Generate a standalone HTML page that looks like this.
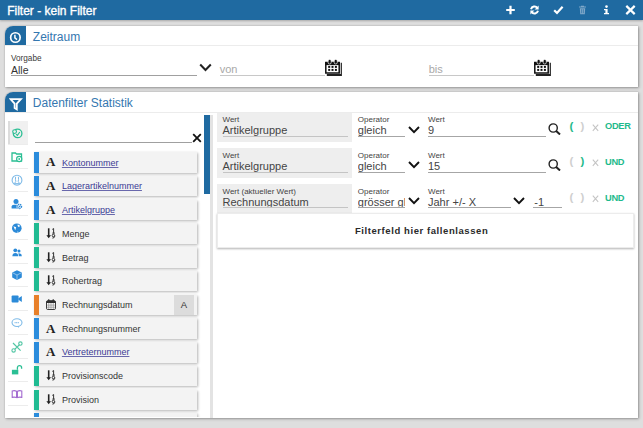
<!DOCTYPE html>
<html><head><meta charset="utf-8"><style>
html,body{margin:0;padding:0;}
body{width:643px;height:428px;overflow:hidden;position:relative;background:#dedede;font-family:'Liberation Sans', sans-serif;}
</style></head><body>
<div style="position:absolute;left:0px;top:0px;width:643px;height:19.5px;background:#1f6aa1;box-shadow:0 1px 2px rgba(0,0,0,0.25)"></div><div style="position:absolute;left:7.2px;top:4.84px;font-size:12px;line-height:12px;white-space:nowrap;font-family:'Liberation Sans', sans-serif;color:#fff;-webkit-text-stroke:0.35px #fff">Filter - kein Filter</div><svg style="position:absolute;left:505px;top:5px;" width="11" height="10" viewBox="0 0 11 10"><path d="M5.5 0.8V9.2M1.2 5H9.8" stroke="#fff" stroke-width="2.2"/></svg><svg style="position:absolute;left:529px;top:5px;" width="11" height="10" viewBox="0 0 11 10"><path d="M2 4.2A3.6 3.6 0 0 1 8.4 3" fill="none" stroke="#fff" stroke-width="2"/><path d="M9.6 0.6V4.6H5.6Z" fill="#fff"/><path d="M9 5.8A3.6 3.6 0 0 1 2.6 7" fill="none" stroke="#fff" stroke-width="2"/><path d="M1.4 9.4V5.4H5.4Z" fill="#fff"/></svg><svg style="position:absolute;left:553px;top:5px;" width="11" height="10" viewBox="0 0 11 10"><path d="M1.2 5.2L4 8L9.6 1.8" fill="none" stroke="#fff" stroke-width="2.2"/></svg><svg style="position:absolute;left:578px;top:5px;" width="9" height="10" viewBox="0 0 9 10"><path d="M1 2H8M3 1.4H6" stroke="#7fa8c9" stroke-width="1.2"/><path d="M1.8 3.2H7.2L6.8 9.2H2.2Z" fill="#7fa8c9"/><path d="M3.6 4.2V8.2M5.4 4.2V8.2" stroke="#1f6aa1" stroke-width="0.6"/></svg><svg style="position:absolute;left:603px;top:5px;" width="7" height="10" viewBox="0 0 7 10"><circle cx="3.5" cy="1.6" r="1.3" fill="#fff"/><path d="M1 4H4.6V8H6V9.2H1V8H2.4V5.2H1Z" fill="#fff"/></svg><svg style="position:absolute;left:625px;top:5px;" width="11" height="10" viewBox="0 0 11 10"><path d="M1.3 0.9L9.7 9.1M9.7 0.9L1.3 9.1" stroke="#fff" stroke-width="2.2"/></svg><div style="position:absolute;left:5px;top:26px;width:633px;height:61px;background:#fff;box-shadow:0 0 1.5px rgba(0,0,0,0.28),1px 1px 3px rgba(0,0,0,0.3);border-top-left-radius:8px"></div><div style="position:absolute;left:5px;top:26px;width:21px;height:19px;background:#1f6aa1;border-top-left-radius:8px"></div><svg style="position:absolute;left:9px;top:30.6px;" width="13" height="13" viewBox="0 0 13 13"><circle cx="6.4" cy="6.5" r="4.75" fill="none" stroke="#fff" stroke-width="1.7"/><path d="M5.9 3.8V6.9L8 8.6" fill="none" stroke="#fff" stroke-width="1.5"/></svg><div style="position:absolute;left:32.8px;top:30.84px;font-size:12px;line-height:12px;white-space:nowrap;font-family:'Liberation Sans', sans-serif;color:#3577b0">Zeitraum</div><div style="position:absolute;left:5px;top:45px;width:633px;height:1px;background:#ececec"></div><div style="position:absolute;left:11px;top:55.36px;font-size:8.2px;line-height:8.2px;white-space:nowrap;font-family:'Liberation Sans', sans-serif;color:#3a3a3a">Vorgabe</div><div style="position:absolute;left:11px;top:64.61px;font-size:10.5px;line-height:10.5px;white-space:nowrap;font-family:'Liberation Sans', sans-serif;color:#333">Alle</div><div style="position:absolute;left:11px;top:75px;width:186px;height:1px;background:#a0a0a0"></div><svg style="position:absolute;left:199px;top:63px;" width="13" height="10" viewBox="0 0 13 10"><path d="M1.2 1.5L6.5 7L11.8 1.5" fill="none" stroke="#222" stroke-width="2"/></svg><div style="position:absolute;left:219.7px;top:63.79px;font-size:11px;line-height:11px;white-space:nowrap;font-family:'Liberation Sans', sans-serif;color:#a8a8a8">von</div><div style="position:absolute;left:219.7px;top:75px;width:105.5px;height:1px;background:#c8c8c8"></div><svg style="position:absolute;left:325px;top:59px;" width="18" height="18" viewBox="0 0 18 18"><path d="M15.7 3.7H16.9V17H1.8V15.1H15.7Z" fill="#222"/><rect x="0.8" y="3.6" width="13.4" height="10.4" fill="#fff" stroke="#111" stroke-width="1.5"/><rect x="0.1" y="2.9" width="14.8" height="3.2" fill="#111"/><rect x="3.1" y="0.4" width="3.1" height="4.6" rx="1.5" fill="#111" stroke="#fff" stroke-width="0.7"/><rect x="9.2" y="0.4" width="3.1" height="4.6" rx="1.5" fill="#111" stroke="#fff" stroke-width="0.7"/><rect x="3.2" y="6.9" width="2" height="2" fill="#111"/><rect x="3.2" y="9.9" width="2" height="2" fill="#111"/><rect x="6.5" y="6.9" width="2" height="2" fill="#111"/><rect x="6.5" y="9.9" width="2" height="2" fill="#111"/><rect x="9.9" y="6.9" width="2" height="2" fill="#111"/><rect x="9.9" y="9.9" width="2" height="2" fill="#111"/></svg><div style="position:absolute;left:428.7px;top:63.79px;font-size:11px;line-height:11px;white-space:nowrap;font-family:'Liberation Sans', sans-serif;color:#a8a8a8">bis</div><div style="position:absolute;left:428.7px;top:75px;width:105.7px;height:1px;background:#c8c8c8"></div><svg style="position:absolute;left:534.4px;top:59px;" width="18" height="18" viewBox="0 0 18 18"><path d="M15.7 3.7H16.9V17H1.8V15.1H15.7Z" fill="#222"/><rect x="0.8" y="3.6" width="13.4" height="10.4" fill="#fff" stroke="#111" stroke-width="1.5"/><rect x="0.1" y="2.9" width="14.8" height="3.2" fill="#111"/><rect x="3.1" y="0.4" width="3.1" height="4.6" rx="1.5" fill="#111" stroke="#fff" stroke-width="0.7"/><rect x="9.2" y="0.4" width="3.1" height="4.6" rx="1.5" fill="#111" stroke="#fff" stroke-width="0.7"/><rect x="3.2" y="6.9" width="2" height="2" fill="#111"/><rect x="3.2" y="9.9" width="2" height="2" fill="#111"/><rect x="6.5" y="6.9" width="2" height="2" fill="#111"/><rect x="6.5" y="9.9" width="2" height="2" fill="#111"/><rect x="9.9" y="6.9" width="2" height="2" fill="#111"/><rect x="9.9" y="9.9" width="2" height="2" fill="#111"/></svg><div style="position:absolute;left:5px;top:92px;width:633px;height:326px;background:#fff;box-shadow:0 0 1.5px rgba(0,0,0,0.28),1px 1px 3px rgba(0,0,0,0.3);border-top-left-radius:8px"></div><div style="position:absolute;left:5px;top:92px;width:21px;height:20px;background:#1f6aa1;border-top-left-radius:8px"></div><svg style="position:absolute;left:8.5px;top:96.5px;" width="15" height="15" viewBox="0 0 15 15"><path d="M1.6 2.1H11.9L7.8 6.6V12.4L5.6 11V6.6Z" fill="none" stroke="#fff" stroke-width="1.8" stroke-linejoin="miter"/></svg><div style="position:absolute;left:32.8px;top:97.44px;font-size:12px;line-height:12px;white-space:nowrap;font-family:'Liberation Sans', sans-serif;color:#3577b0">Datenfilter Statistik</div><div style="position:absolute;left:5px;top:112px;width:633px;height:1px;background:#ececec"></div><div style="position:absolute;left:8px;top:143.75px;width:20px;height:1px;background:#ececec"></div><div style="position:absolute;left:8px;top:167.5px;width:20px;height:1px;background:#ececec"></div><div style="position:absolute;left:8px;top:191.25px;width:20px;height:1px;background:#ececec"></div><div style="position:absolute;left:8px;top:215.0px;width:20px;height:1px;background:#ececec"></div><div style="position:absolute;left:8px;top:238.75px;width:20px;height:1px;background:#ececec"></div><div style="position:absolute;left:8px;top:262.5px;width:20px;height:1px;background:#ececec"></div><div style="position:absolute;left:8px;top:286.25px;width:20px;height:1px;background:#ececec"></div><div style="position:absolute;left:8px;top:310.0px;width:20px;height:1px;background:#ececec"></div><div style="position:absolute;left:8px;top:333.75px;width:20px;height:1px;background:#ececec"></div><div style="position:absolute;left:8px;top:357.5px;width:20px;height:1px;background:#ececec"></div><div style="position:absolute;left:8px;top:381.25px;width:20px;height:1px;background:#ececec"></div><div style="position:absolute;left:8px;top:405.0px;width:20px;height:1px;background:#ececec"></div><div style="position:absolute;left:8px;top:120.8px;width:20px;height:23.2px;background:#f0f0f0;border-left:2px solid #dcdcdc;box-sizing:border-box"></div><div style="position:absolute;left:34.5px;top:142px;width:157.5px;height:1px;background:#a0a0a0"></div><svg style="position:absolute;left:192px;top:133px;" width="10" height="10" viewBox="0 0 10 10"><path d="M1.2 1.2L8.8 8.8M8.8 1.2L1.2 8.8" stroke="#111" stroke-width="1.8"/></svg><div style="position:absolute;left:0;top:0;width:643px;height:417px;overflow:hidden"><div style="position:absolute;left:34.4px;top:152.2px;width:162.6px;height:20.5px;background:#f3f3f3;box-shadow:1px 1px 2.5px rgba(0,0,0,0.3)"></div><div style="position:absolute;left:34.4px;top:152.2px;width:4.9px;height:20.5px;background:#2b8cdc"></div><div style="position:absolute;left:45.9px;top:155.40px;font-size:13px;line-height:13px;white-space:nowrap;font-family:'Liberation Serif', serif;color:#222;font-weight:bold">A</div><div style="position:absolute;left:61.9px;top:158.58px;font-size:9px;line-height:9px;white-space:nowrap;font-family:'Liberation Sans', sans-serif;color:#3b3a94;text-decoration:underline;text-decoration-color:rgba(59,58,148,0.75)">Kontonummer</div><div style="position:absolute;left:34.4px;top:175.92999999999998px;width:162.6px;height:20.5px;background:#f3f3f3;box-shadow:1px 1px 2.5px rgba(0,0,0,0.3)"></div><div style="position:absolute;left:34.4px;top:175.92999999999998px;width:4.9px;height:20.5px;background:#2b8cdc"></div><div style="position:absolute;left:45.9px;top:179.13px;font-size:13px;line-height:13px;white-space:nowrap;font-family:'Liberation Serif', serif;color:#222;font-weight:bold">A</div><div style="position:absolute;left:61.9px;top:182.31px;font-size:9px;line-height:9px;white-space:nowrap;font-family:'Liberation Sans', sans-serif;color:#3b3a94;text-decoration:underline;text-decoration-color:rgba(59,58,148,0.75)">Lagerartikelnummer</div><div style="position:absolute;left:34.4px;top:199.66px;width:162.6px;height:20.5px;background:#f3f3f3;box-shadow:1px 1px 2.5px rgba(0,0,0,0.3)"></div><div style="position:absolute;left:34.4px;top:199.66px;width:4.9px;height:20.5px;background:#2b8cdc"></div><div style="position:absolute;left:45.9px;top:202.86px;font-size:13px;line-height:13px;white-space:nowrap;font-family:'Liberation Serif', serif;color:#222;font-weight:bold">A</div><div style="position:absolute;left:61.9px;top:206.04px;font-size:9px;line-height:9px;white-space:nowrap;font-family:'Liberation Sans', sans-serif;color:#3b3a94;text-decoration:underline;text-decoration-color:rgba(59,58,148,0.75)">Artikelgruppe</div><div style="position:absolute;left:34.4px;top:223.39px;width:162.6px;height:20.5px;background:#f3f3f3;box-shadow:1px 1px 2.5px rgba(0,0,0,0.3)"></div><div style="position:absolute;left:34.4px;top:223.39px;width:4.9px;height:20.5px;background:#20bb92"></div><svg style="position:absolute;left:45.5px;top:227.89px;" width="11" height="11" viewBox="0 0 11 11"><path d="M2.7 0.3V8" stroke="#222" stroke-width="1.6"/><path d="M0.4 7.2H5L2.7 10.3Z" fill="#222"/><path d="M6.3 1.4L7.6 0.5V5.3M6.3 5.1H8.9" fill="none" stroke="#333" stroke-width="1"/><circle cx="7.4" cy="7.5" r="1.25" fill="none" stroke="#333" stroke-width="1"/><path d="M8.65 7.5V8.4Q8.6 10 6.4 10.1" fill="none" stroke="#333" stroke-width="1"/></svg><div style="position:absolute;left:61.9px;top:229.77px;font-size:9px;line-height:9px;white-space:nowrap;font-family:'Liberation Sans', sans-serif;color:#333">Menge</div><div style="position:absolute;left:34.4px;top:247.12px;width:162.6px;height:20.5px;background:#f3f3f3;box-shadow:1px 1px 2.5px rgba(0,0,0,0.3)"></div><div style="position:absolute;left:34.4px;top:247.12px;width:4.9px;height:20.5px;background:#20bb92"></div><svg style="position:absolute;left:45.5px;top:251.62px;" width="11" height="11" viewBox="0 0 11 11"><path d="M2.7 0.3V8" stroke="#222" stroke-width="1.6"/><path d="M0.4 7.2H5L2.7 10.3Z" fill="#222"/><path d="M6.3 1.4L7.6 0.5V5.3M6.3 5.1H8.9" fill="none" stroke="#333" stroke-width="1"/><circle cx="7.4" cy="7.5" r="1.25" fill="none" stroke="#333" stroke-width="1"/><path d="M8.65 7.5V8.4Q8.6 10 6.4 10.1" fill="none" stroke="#333" stroke-width="1"/></svg><div style="position:absolute;left:61.9px;top:253.50px;font-size:9px;line-height:9px;white-space:nowrap;font-family:'Liberation Sans', sans-serif;color:#333">Betrag</div><div style="position:absolute;left:34.4px;top:270.85px;width:162.6px;height:20.5px;background:#f3f3f3;box-shadow:1px 1px 2.5px rgba(0,0,0,0.3)"></div><div style="position:absolute;left:34.4px;top:270.85px;width:4.9px;height:20.5px;background:#20bb92"></div><svg style="position:absolute;left:45.5px;top:275.35px;" width="11" height="11" viewBox="0 0 11 11"><path d="M2.7 0.3V8" stroke="#222" stroke-width="1.6"/><path d="M0.4 7.2H5L2.7 10.3Z" fill="#222"/><path d="M6.3 1.4L7.6 0.5V5.3M6.3 5.1H8.9" fill="none" stroke="#333" stroke-width="1"/><circle cx="7.4" cy="7.5" r="1.25" fill="none" stroke="#333" stroke-width="1"/><path d="M8.65 7.5V8.4Q8.6 10 6.4 10.1" fill="none" stroke="#333" stroke-width="1"/></svg><div style="position:absolute;left:61.9px;top:277.23px;font-size:9px;line-height:9px;white-space:nowrap;font-family:'Liberation Sans', sans-serif;color:#333">Rohertrag</div><div style="position:absolute;left:34.4px;top:294.58px;width:162.6px;height:20.5px;background:#f3f3f3;box-shadow:1px 1px 2.5px rgba(0,0,0,0.3)"></div><div style="position:absolute;left:34.4px;top:294.58px;width:4.9px;height:20.5px;background:#e8802a"></div><svg style="position:absolute;left:45.8px;top:299.38px;" width="10" height="11" viewBox="0 0 10 11"><rect x="0.5" y="1.7" width="9" height="8.8" rx="1.3" fill="#fff" stroke="#3a3a3a" stroke-width="1"/><path d="M0.5 3Q0.5 1.7 1.8 1.7H8.2Q9.5 1.7 9.5 3V4H0.5Z" fill="#2e2e2e"/><rect x="1.9" y="0.2" width="1.7" height="2.8" rx="0.8" fill="#333"/><rect x="6.4" y="0.2" width="1.7" height="2.8" rx="0.8" fill="#333"/><path d="M2.75 4V10.2M5 4V10.2M7.25 4V10.2M0.8 6.1H9.2M0.8 8.2H9.2" stroke="#8c8c8c" stroke-width="0.7"/></svg><div style="position:absolute;left:61.9px;top:300.96px;font-size:9px;line-height:9px;white-space:nowrap;font-family:'Liberation Sans', sans-serif;color:#333">Rechnungsdatum</div><div style="position:absolute;left:173.9px;top:294.78px;width:20px;height:20px;background:#dcdcdc"></div><div style="position:absolute;left:180.7px;top:299.94px;font-size:9.5px;line-height:9.5px;white-space:nowrap;font-family:'Liberation Sans', sans-serif;color:#333">A</div><div style="position:absolute;left:34.4px;top:318.31px;width:162.6px;height:20.5px;background:#f3f3f3;box-shadow:1px 1px 2.5px rgba(0,0,0,0.3)"></div><div style="position:absolute;left:34.4px;top:318.31px;width:4.9px;height:20.5px;background:#2b8cdc"></div><div style="position:absolute;left:45.9px;top:321.51px;font-size:13px;line-height:13px;white-space:nowrap;font-family:'Liberation Serif', serif;color:#222;font-weight:bold">A</div><div style="position:absolute;left:61.9px;top:324.69px;font-size:9px;line-height:9px;white-space:nowrap;font-family:'Liberation Sans', sans-serif;color:#333">Rechnungsnummer</div><div style="position:absolute;left:34.4px;top:342.03999999999996px;width:162.6px;height:20.5px;background:#f3f3f3;box-shadow:1px 1px 2.5px rgba(0,0,0,0.3)"></div><div style="position:absolute;left:34.4px;top:342.03999999999996px;width:4.9px;height:20.5px;background:#2b8cdc"></div><div style="position:absolute;left:45.9px;top:345.24px;font-size:13px;line-height:13px;white-space:nowrap;font-family:'Liberation Serif', serif;color:#222;font-weight:bold">A</div><div style="position:absolute;left:61.9px;top:348.42px;font-size:9px;line-height:9px;white-space:nowrap;font-family:'Liberation Sans', sans-serif;color:#3b3a94;text-decoration:underline;text-decoration-color:rgba(59,58,148,0.75)">Vertreternummer</div><div style="position:absolute;left:34.4px;top:365.77px;width:162.6px;height:20.5px;background:#f3f3f3;box-shadow:1px 1px 2.5px rgba(0,0,0,0.3)"></div><div style="position:absolute;left:34.4px;top:365.77px;width:4.9px;height:20.5px;background:#20bb92"></div><svg style="position:absolute;left:45.5px;top:370.27px;" width="11" height="11" viewBox="0 0 11 11"><path d="M2.7 0.3V8" stroke="#222" stroke-width="1.6"/><path d="M0.4 7.2H5L2.7 10.3Z" fill="#222"/><path d="M6.3 1.4L7.6 0.5V5.3M6.3 5.1H8.9" fill="none" stroke="#333" stroke-width="1"/><circle cx="7.4" cy="7.5" r="1.25" fill="none" stroke="#333" stroke-width="1"/><path d="M8.65 7.5V8.4Q8.6 10 6.4 10.1" fill="none" stroke="#333" stroke-width="1"/></svg><div style="position:absolute;left:61.9px;top:372.15px;font-size:9px;line-height:9px;white-space:nowrap;font-family:'Liberation Sans', sans-serif;color:#333">Provisionscode</div><div style="position:absolute;left:34.4px;top:389.5px;width:162.6px;height:20.5px;background:#f3f3f3;box-shadow:1px 1px 2.5px rgba(0,0,0,0.3)"></div><div style="position:absolute;left:34.4px;top:389.5px;width:4.9px;height:20.5px;background:#20bb92"></div><svg style="position:absolute;left:45.5px;top:394.0px;" width="11" height="11" viewBox="0 0 11 11"><path d="M2.7 0.3V8" stroke="#222" stroke-width="1.6"/><path d="M0.4 7.2H5L2.7 10.3Z" fill="#222"/><path d="M6.3 1.4L7.6 0.5V5.3M6.3 5.1H8.9" fill="none" stroke="#333" stroke-width="1"/><circle cx="7.4" cy="7.5" r="1.25" fill="none" stroke="#333" stroke-width="1"/><path d="M8.65 7.5V8.4Q8.6 10 6.4 10.1" fill="none" stroke="#333" stroke-width="1"/></svg><div style="position:absolute;left:61.9px;top:395.88px;font-size:9px;line-height:9px;white-space:nowrap;font-family:'Liberation Sans', sans-serif;color:#333">Provision</div><div style="position:absolute;left:34.4px;top:413.23px;width:162.6px;height:20.5px;background:#f3f3f3;box-shadow:1px 1px 2.5px rgba(0,0,0,0.3)"></div><div style="position:absolute;left:34.4px;top:413.23px;width:4.9px;height:20.5px;background:#2b8cdc"></div><div style="position:absolute;left:45.9px;top:416.43px;font-size:13px;line-height:13px;white-space:nowrap;font-family:'Liberation Serif', serif;color:#222;font-weight:bold">A</div></div><div style="position:absolute;left:203.5px;top:115px;width:6px;height:78.7px;background:#1f6aa1"></div><div style="position:absolute;left:209.5px;top:115px;width:3.5px;height:303px;background:#e3e3e3"></div><div style="position:absolute;left:217px;top:112.8px;width:135px;height:29.5px;background:#eeeeee"></div><div style="position:absolute;left:222.5px;top:116.13px;font-size:8px;line-height:8px;white-space:nowrap;font-family:'Liberation Sans', sans-serif;color:#444">Wert</div><div style="position:absolute;left:222.5px;top:125.39px;font-size:11px;line-height:11px;white-space:nowrap;font-family:'Liberation Sans', sans-serif;color:#444">Artikelgruppe</div><div style="position:absolute;left:222.5px;top:136.0px;width:125.2px;height:1px;background:#c4c4c4"></div><div style="position:absolute;left:357.8px;top:116.13px;font-size:8px;line-height:8px;white-space:nowrap;font-family:'Liberation Sans', sans-serif;color:#444">Operator</div><div style="position:absolute;left:357.8px;top:112.8px;width:47.7px;height:28px;overflow:hidden"><div style="position:absolute;left:0px;top:12.59px;font-size:11px;line-height:11px;white-space:nowrap;font-family:'Liberation Sans', sans-serif;color:#444">gleich</div></div><div style="position:absolute;left:357.8px;top:136.0px;width:47.7px;height:1px;background:#a6a6a6"></div><svg style="position:absolute;left:407.5px;top:125.5px;" width="12" height="8" viewBox="0 0 12 8"><path d="M1 1L6 6.2L11 1" fill="none" stroke="#111" stroke-width="1.9"/></svg><div style="position:absolute;left:428px;top:116.13px;font-size:8px;line-height:8px;white-space:nowrap;font-family:'Liberation Sans', sans-serif;color:#444">Wert</div><div style="position:absolute;left:428px;top:125.39px;font-size:11px;line-height:11px;white-space:nowrap;font-family:'Liberation Sans', sans-serif;color:#444">9</div><div style="position:absolute;left:428px;top:136.0px;width:118px;height:1px;background:#a6a6a6"></div><svg style="position:absolute;left:547.5px;top:123.2px;" width="13" height="12" viewBox="0 0 13 12"><circle cx="5.2" cy="5" r="4.1" fill="none" stroke="#222" stroke-width="1.4"/><path d="M8.2 8L12 11.5" stroke="#222" stroke-width="2"/></svg><div style="position:absolute;left:569.4px;top:120.57px;font-size:11.5px;line-height:11.5px;white-space:nowrap;font-family:'Liberation Sans', sans-serif;color:#1fba8c;font-weight:bold">(</div><div style="position:absolute;left:580.4px;top:120.57px;font-size:11.5px;line-height:11.5px;white-space:nowrap;font-family:'Liberation Sans', sans-serif;color:#cfcfcf;font-weight:bold">)</div><svg style="position:absolute;left:592px;top:123.5px;" width="7" height="8" viewBox="0 0 7 8"><path d="M0.8 0.6L6.2 6.8M6.2 0.6L0.8 6.8" stroke="#c4c4c4" stroke-width="1.05"/></svg><div style="position:absolute;left:605px;top:122.43px;font-size:9.3px;line-height:9.3px;white-space:nowrap;font-family:'Liberation Sans', sans-serif;color:#1fba8c;font-weight:bold;letter-spacing:-0.3px">ODER</div><div style="position:absolute;left:217px;top:148.4px;width:135px;height:29.5px;background:#eeeeee"></div><div style="position:absolute;left:222.5px;top:151.88px;font-size:8px;line-height:8px;white-space:nowrap;font-family:'Liberation Sans', sans-serif;color:#444">Wert</div><div style="position:absolute;left:222.5px;top:161.14px;font-size:11px;line-height:11px;white-space:nowrap;font-family:'Liberation Sans', sans-serif;color:#444">Artikelgruppe</div><div style="position:absolute;left:222.5px;top:171.6px;width:125.2px;height:1px;background:#c4c4c4"></div><div style="position:absolute;left:357.8px;top:151.88px;font-size:8px;line-height:8px;white-space:nowrap;font-family:'Liberation Sans', sans-serif;color:#444">Operator</div><div style="position:absolute;left:357.8px;top:148.4px;width:47.7px;height:28px;overflow:hidden"><div style="position:absolute;left:0px;top:12.74px;font-size:11px;line-height:11px;white-space:nowrap;font-family:'Liberation Sans', sans-serif;color:#444">gleich</div></div><div style="position:absolute;left:357.8px;top:171.6px;width:47.7px;height:1px;background:#a6a6a6"></div><svg style="position:absolute;left:407.5px;top:161.25px;" width="12" height="8" viewBox="0 0 12 8"><path d="M1 1L6 6.2L11 1" fill="none" stroke="#111" stroke-width="1.9"/></svg><div style="position:absolute;left:428px;top:151.88px;font-size:8px;line-height:8px;white-space:nowrap;font-family:'Liberation Sans', sans-serif;color:#444">Wert</div><div style="position:absolute;left:428px;top:161.14px;font-size:11px;line-height:11px;white-space:nowrap;font-family:'Liberation Sans', sans-serif;color:#444">15</div><div style="position:absolute;left:428px;top:171.6px;width:118px;height:1px;background:#a6a6a6"></div><svg style="position:absolute;left:547.5px;top:158.95px;" width="13" height="12" viewBox="0 0 13 12"><circle cx="5.2" cy="5" r="4.1" fill="none" stroke="#222" stroke-width="1.4"/><path d="M8.2 8L12 11.5" stroke="#222" stroke-width="2"/></svg><div style="position:absolute;left:569.4px;top:156.32px;font-size:11.5px;line-height:11.5px;white-space:nowrap;font-family:'Liberation Sans', sans-serif;color:#cfcfcf;font-weight:bold">(</div><div style="position:absolute;left:580.4px;top:156.32px;font-size:11.5px;line-height:11.5px;white-space:nowrap;font-family:'Liberation Sans', sans-serif;color:#1fba8c;font-weight:bold">)</div><svg style="position:absolute;left:592px;top:159.25px;" width="7" height="8" viewBox="0 0 7 8"><path d="M0.8 0.6L6.2 6.8M6.2 0.6L0.8 6.8" stroke="#c4c4c4" stroke-width="1.05"/></svg><div style="position:absolute;left:605px;top:158.18px;font-size:9.3px;line-height:9.3px;white-space:nowrap;font-family:'Liberation Sans', sans-serif;color:#1fba8c;font-weight:bold;letter-spacing:-0.3px">UND</div><div style="position:absolute;left:217px;top:184.0px;width:135px;height:29.5px;background:#eeeeee"></div><div style="position:absolute;left:222.5px;top:187.63px;font-size:8px;line-height:8px;white-space:nowrap;font-family:'Liberation Sans', sans-serif;color:#444">Wert (aktueller Wert)</div><div style="position:absolute;left:222.5px;top:196.89px;font-size:11px;line-height:11px;white-space:nowrap;font-family:'Liberation Sans', sans-serif;color:#444">Rechnungsdatum</div><div style="position:absolute;left:222.5px;top:207.2px;width:125.2px;height:1px;background:#c4c4c4"></div><div style="position:absolute;left:357.8px;top:187.63px;font-size:8px;line-height:8px;white-space:nowrap;font-family:'Liberation Sans', sans-serif;color:#444">Operator</div><div style="position:absolute;left:357.8px;top:184.0px;width:47.7px;height:28px;overflow:hidden"><div style="position:absolute;left:0px;top:12.89px;font-size:11px;line-height:11px;white-space:nowrap;font-family:'Liberation Sans', sans-serif;color:#444">gr&ouml;sser gleich</div></div><div style="position:absolute;left:357.8px;top:207.2px;width:47.7px;height:1px;background:#a6a6a6"></div><svg style="position:absolute;left:407.5px;top:197.0px;" width="12" height="8" viewBox="0 0 12 8"><path d="M1 1L6 6.2L11 1" fill="none" stroke="#111" stroke-width="1.9"/></svg><div style="position:absolute;left:428px;top:187.63px;font-size:8px;line-height:8px;white-space:nowrap;font-family:'Liberation Sans', sans-serif;color:#444">Wert</div><div style="position:absolute;left:428px;top:196.89px;font-size:11px;line-height:11px;white-space:nowrap;font-family:'Liberation Sans', sans-serif;color:#444">Jahr +/- X</div><div style="position:absolute;left:428px;top:207.2px;width:83px;height:1px;background:#a6a6a6"></div><svg style="position:absolute;left:513px;top:197.0px;" width="12" height="8" viewBox="0 0 12 8"><path d="M1 1L6 6.2L11 1" fill="none" stroke="#111" stroke-width="1.9"/></svg><div style="position:absolute;left:534.3px;top:196.89px;font-size:11px;line-height:11px;white-space:nowrap;font-family:'Liberation Sans', sans-serif;color:#444">-1</div><div style="position:absolute;left:533px;top:207.2px;width:29.4px;height:1px;background:#a6a6a6"></div><div style="position:absolute;left:569.4px;top:192.07px;font-size:11.5px;line-height:11.5px;white-space:nowrap;font-family:'Liberation Sans', sans-serif;color:#cfcfcf;font-weight:bold">(</div><div style="position:absolute;left:580.4px;top:192.07px;font-size:11.5px;line-height:11.5px;white-space:nowrap;font-family:'Liberation Sans', sans-serif;color:#cfcfcf;font-weight:bold">)</div><svg style="position:absolute;left:592px;top:195.0px;" width="7" height="8" viewBox="0 0 7 8"><path d="M0.8 0.6L6.2 6.8M6.2 0.6L0.8 6.8" stroke="#c4c4c4" stroke-width="1.05"/></svg><div style="position:absolute;left:605px;top:193.93px;font-size:9.3px;line-height:9.3px;white-space:nowrap;font-family:'Liberation Sans', sans-serif;color:#1fba8c;font-weight:bold;letter-spacing:-0.3px">UND</div><div style="position:absolute;left:217px;top:213px;width:417px;height:34.5px;background:#fff;border:1px solid #ececec;box-sizing:border-box;box-shadow:0 1px 2px rgba(0,0,0,0.3)"></div><div style="position:absolute;left:354.9px;top:226.26px;font-size:9.5px;line-height:9.5px;white-space:nowrap;font-family:'Liberation Sans', sans-serif;color:#2a2a2a;font-weight:bold;letter-spacing:0.58px">Filterfeld hier fallenlassen</div><svg style="position:absolute;left:10.5px;top:126.80000000000001px;" width="12" height="12" viewBox="0 0 12 12"><circle cx="6.6" cy="6.4" r="4.3" fill="none" stroke="#2bbf94" stroke-width="1.3"/><circle cx="3.6" cy="4.6" r="1.9" fill="#f0f0f0" stroke="#2bbf94" stroke-width="1.1"/><path d="M5 7.2L6.4 8.4L8.8 5" fill="none" stroke="#2bbf94" stroke-width="1.1"/></svg><svg style="position:absolute;left:10.5px;top:150.55px;" width="12" height="12" viewBox="0 0 12 12"><path d="M1 2H4.5L5.5 3H10.5V10H1Z" fill="none" stroke="#2bbf94" stroke-width="1.3"/><circle cx="8.2" cy="8" r="2.6" fill="#fff" stroke="#2bbf94" stroke-width="1.2"/><circle cx="8.2" cy="8" r="0.9" fill="#2bbf94"/></svg><svg style="position:absolute;left:10.5px;top:174.3px;" width="12" height="12" viewBox="0 0 12 12"><circle cx="6" cy="6.2" r="4.9" fill="none" stroke="#7fbbe8" stroke-width="1.1"/><path d="M4.6 2.8Q4.2 5.6 4.8 7.4L3.4 9.6H8.6L7.2 7.4Q7.8 5.6 7.4 2.8" fill="none" stroke="#7fbbe8" stroke-width="1"/></svg><svg style="position:absolute;left:10.5px;top:198.05px;" width="12" height="12" viewBox="0 0 12 12"><circle cx="5" cy="3.6" r="2.5" fill="#2b8ad8"/><path d="M0.6 10.4V8.6Q0.6 6.8 3 6.8H6.6V10.4Z" fill="#2b8ad8"/><circle cx="8.4" cy="8.4" r="2.9" fill="#fff"/><circle cx="8.4" cy="8.4" r="2" fill="none" stroke="#2b8ad8" stroke-width="1.6" stroke-dasharray="1.2 0.6"/><circle cx="8.4" cy="8.4" r="0.7" fill="#2b8ad8"/></svg><svg style="position:absolute;left:10.5px;top:221.8px;" width="12" height="12" viewBox="0 0 12 12"><circle cx="5.8" cy="6.2" r="4.8" fill="#2b8ad8"/><path d="M2.4 4.2L5.2 5.2L4.2 8.2Z" fill="#fff"/><path d="M6.8 2.2L9 3.8L8 5.2L6.6 4Z" fill="#fff"/><path d="M5.4 10.2L7 9.4L7.6 10.4Z" fill="#fff"/></svg><svg style="position:absolute;left:10.5px;top:245.55px;" width="12" height="12" viewBox="0 0 12 12"><circle cx="4.3" cy="4.3" r="1.9" fill="#2b8ad8"/><path d="M1.4 10.2Q1.4 6.9 4.3 6.9Q7.2 6.9 7.2 10.2Z" fill="#2b8ad8"/><circle cx="8" cy="5" r="1.5" fill="#2b8ad8"/><path d="M7.4 7.3Q10.8 7.2 10.8 10.2H7.9Z" fill="#2b8ad8"/></svg><svg style="position:absolute;left:10.5px;top:269.3px;" width="12" height="12" viewBox="0 0 12 12"><path d="M6 1.2L10.8 3.6V8.6L6 11L1.2 8.6V3.6Z" fill="#2b8ad8"/><path d="M1.6 3.8L6 6L10.4 3.8M6 6V10.6" fill="none" stroke="#fff" stroke-width="0.7" opacity="0.7"/></svg><svg style="position:absolute;left:10.5px;top:293.05px;" width="12" height="12" viewBox="0 0 12 12"><rect x="0.6" y="2.6" width="7" height="6.8" rx="1" fill="#2b8ad8"/><path d="M7.4 5.2L10.8 3V9L7.4 6.8Z" fill="#2b8ad8"/></svg><svg style="position:absolute;left:10.5px;top:316.8px;" width="12" height="12" viewBox="0 0 12 12"><ellipse cx="6" cy="5.6" rx="5" ry="3.9" fill="none" stroke="#7fbbe8" stroke-width="1.1"/><path d="M6.4 9.4L7.8 11L8 9" fill="#7fbbe8"/><path d="M3.6 5.6H8.4" stroke="#7fbbe8" stroke-width="1.3" stroke-dasharray="1 0.6"/></svg><svg style="position:absolute;left:10.5px;top:340.55px;" width="12" height="12" viewBox="0 0 12 12"><path d="M2 2L9.6 9.6M10 2.2L2.4 9.6" stroke="#52c6a4" stroke-width="1.2"/><circle cx="9.4" cy="2.6" r="1.7" fill="#fff" stroke="#52c6a4" stroke-width="1.1"/><circle cx="2.6" cy="9.4" r="1.7" fill="#fff" stroke="#52c6a4" stroke-width="1.1"/></svg><svg style="position:absolute;left:10.5px;top:364.3px;" width="12" height="12" viewBox="0 0 12 12"><rect x="0.9" y="5.8" width="6.4" height="4.6" fill="#2bbf94"/><path d="M6.4 5.8V3.8A2.1 2.1 0 0 1 10.6 3.8V4.8" fill="none" stroke="#2bbf94" stroke-width="1.3"/></svg><svg style="position:absolute;left:10.5px;top:388.05px;" width="12" height="12" viewBox="0 0 12 12"><path d="M1.2 3Q3.4 2.2 5.6 3.2V9.6Q3.4 8.8 1.2 9.4Z M10.8 3Q8.6 2.2 6.4 3.2V9.6Q8.6 8.8 10.8 9.4Z" fill="none" stroke="#a36ad0" stroke-width="1.1"/></svg>
</body></html>
